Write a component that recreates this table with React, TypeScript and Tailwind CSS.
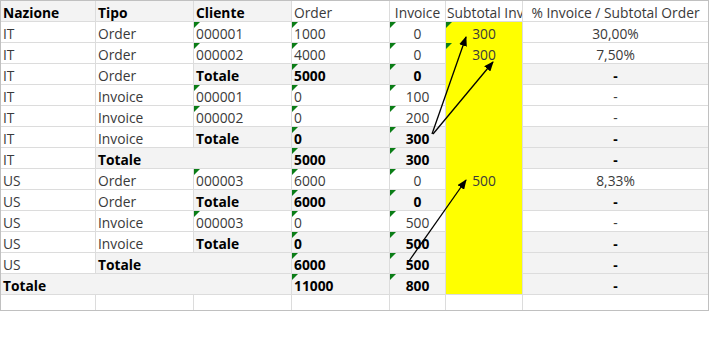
type Cell = {
  t?: string;
  span?: number;
  b?: boolean;
  g?: boolean;
  y?: boolean;
  flag?: boolean;
  c?: boolean;
  last?: boolean;
};

const normal = (
  naz: string,
  tipo: string,
  cli: string,
  ord: string,
  inv: string,
  sub = "",
  pct = "-",
  subFlag = false
): Cell[] => [
  { t: naz },
  { t: tipo },
  { t: cli, flag: true },
  { t: ord, flag: true },
  { t: inv, flag: true, c: true },
  { t: sub, y: true, flag: subFlag, c: true },
  { t: pct, c: true },
];

const subtotal = (naz: string, tipo: string, ord: string, inv: string): Cell[] => [
  { t: naz },
  { t: tipo },
  { t: "Totale", b: true, g: true },
  { t: ord, b: true, g: true, flag: true },
  { t: inv, b: true, g: true, flag: true, c: true },
  { y: true },
  { t: "-", b: true, g: true, c: true },
];

const nation = (naz: string, ord: string, inv: string): Cell[] => [
  { t: naz },
  { t: "Totale", span: 2, b: true, g: true },
  { t: ord, b: true, g: true, flag: true },
  { t: inv, b: true, g: true, flag: true, c: true },
  { y: true },
  { t: "-", b: true, g: true, c: true },
];

const rows: Cell[][] = [
  normal("IT", "Order", "000001", "1000", "0", "300", "30,00%", true),
  normal("IT", "Order", "000002", "4000", "0", "300", "7,50%", true),
  subtotal("IT", "Order", "5000", "0"),
  normal("IT", "Invoice", "000001", "0", "100"),
  normal("IT", "Invoice", "000002", "0", "200"),
  subtotal("IT", "Invoice", "0", "300"),
  nation("IT", "5000", "300"),
  normal("US", "Order", "000003", "6000", "0", "500", "8,33%"),
  subtotal("US", "Order", "6000", "0"),
  normal("US", "Invoice", "000003", "0", "500"),
  subtotal("US", "Invoice", "0", "500"),
  nation("US", "6000", "500"),
  [
    { t: "Totale", span: 3, b: true, g: true },
    { t: "11000", b: true, g: true, flag: true },
    { t: "800", b: true, g: true, flag: true, c: true },
    { y: true, last: true },
    { t: "-", b: true, g: true, c: true },
  ],
];

function Flag() {
  return (
    <span className="absolute left-0 top-0 h-[6px] w-[6px] bg-[#0a7d16] [clip-path:polygon(0_0,100%_0,0_100%)]" />
  );
}

function DataCell({ cell }: { cell: Cell }) {
  const bg = cell.y ? "bg-[#ffff00]" : cell.g ? "bg-[#f3f3f3]" : "bg-white";
  const span = cell.span === 3 ? "col-span-3" : cell.span === 2 ? "col-span-2" : "";
  const yellowGap = cell.y && !cell.last ? "shadow-[0_1px_0_#ffff00]" : "";
  return (
    <div
      className={`relative flex h-[20px] items-end overflow-hidden whitespace-nowrap px-[2px] ${bg} ${span} ${yellowGap} ${
        cell.c ? "justify-center" : "justify-start"
      } ${cell.b ? "font-bold text-black" : "text-[#3a3a3a]"}`}
    >
      {cell.flag && <Flag />}
      <span className="leading-[17px]">{cell.t}</span>
    </div>
  );
}

export default function App() {
  return (
    <div className="min-h-screen bg-white">
      <div className="relative w-[709px] text-[13.8px] [font-family:'Open_Sans',sans-serif]">
        <div className="grid grid-cols-[94px_97px_97px_97px_55px_76px_185px] gap-px border border-[#c0c0c0] bg-[#dcdcdc]">
          {/* header */}
          <div className="flex h-[20px] items-end bg-[#f3f3f3] px-[2px] font-bold text-black">
            <span className="leading-[17px]">Nazione</span>
          </div>
          <div className="flex h-[20px] items-end bg-[#f3f3f3] px-[2px] font-bold text-black">
            <span className="leading-[17px]">Tipo</span>
          </div>
          <div className="flex h-[20px] items-end bg-[#f3f3f3] px-[2px] font-bold text-black">
            <span className="leading-[17px]">Cliente</span>
          </div>
          <div className="flex h-[20px] items-end bg-white px-[2px] text-[#3a3a3a]">
            <span className="leading-[17px]">Order</span>
          </div>
          <div className="flex h-[20px] items-end justify-center bg-white text-[#3a3a3a]">
            <span className="leading-[17px]">Invoice</span>
          </div>
          <div className="flex h-[20px] items-end overflow-hidden whitespace-nowrap bg-white pl-px text-[#3a3a3a]">
            <span className="leading-[17px]">Subtotal Invoice</span>
          </div>
          <div className="flex h-[20px] items-end justify-center whitespace-nowrap bg-white text-[#3a3a3a]">
            <span className="leading-[17px]">% Invoice / Subtotal Order</span>
          </div>

          {rows.map((row, i) =>
            row.map((cell, j) => <DataCell key={`${i}-${j}`} cell={cell} />)
          )}

          {/* empty last row */}
          {[0, 1, 2, 3, 4, 5, 6].map((k) => (
            <div key={`e${k}`} className="h-[15px] bg-white" />
          ))}
        </div>

        <svg
          className="pointer-events-none absolute left-0 top-0"
          width="709"
          height="311"
          viewBox="0 0 709 311"
        >
          <defs>
            <marker
              id="head"
              markerWidth="10"
              markerHeight="8"
              refX="9"
              refY="4"
              orient="auto"
              markerUnits="userSpaceOnUse"
            >
              <path d="M0,0 L10,4 L0,8 Z" fill="#000" />
            </marker>
          </defs>
          <g stroke="#000" strokeWidth="1.3" fill="none">
            <line x1="432" y1="134" x2="466" y2="37" markerEnd="url(#head)" />
            <line x1="433" y1="134" x2="493" y2="62" markerEnd="url(#head)" />
            <line x1="409" y1="261" x2="466" y2="180" markerEnd="url(#head)" />
          </g>
        </svg>
      </div>
    </div>
  );
}
